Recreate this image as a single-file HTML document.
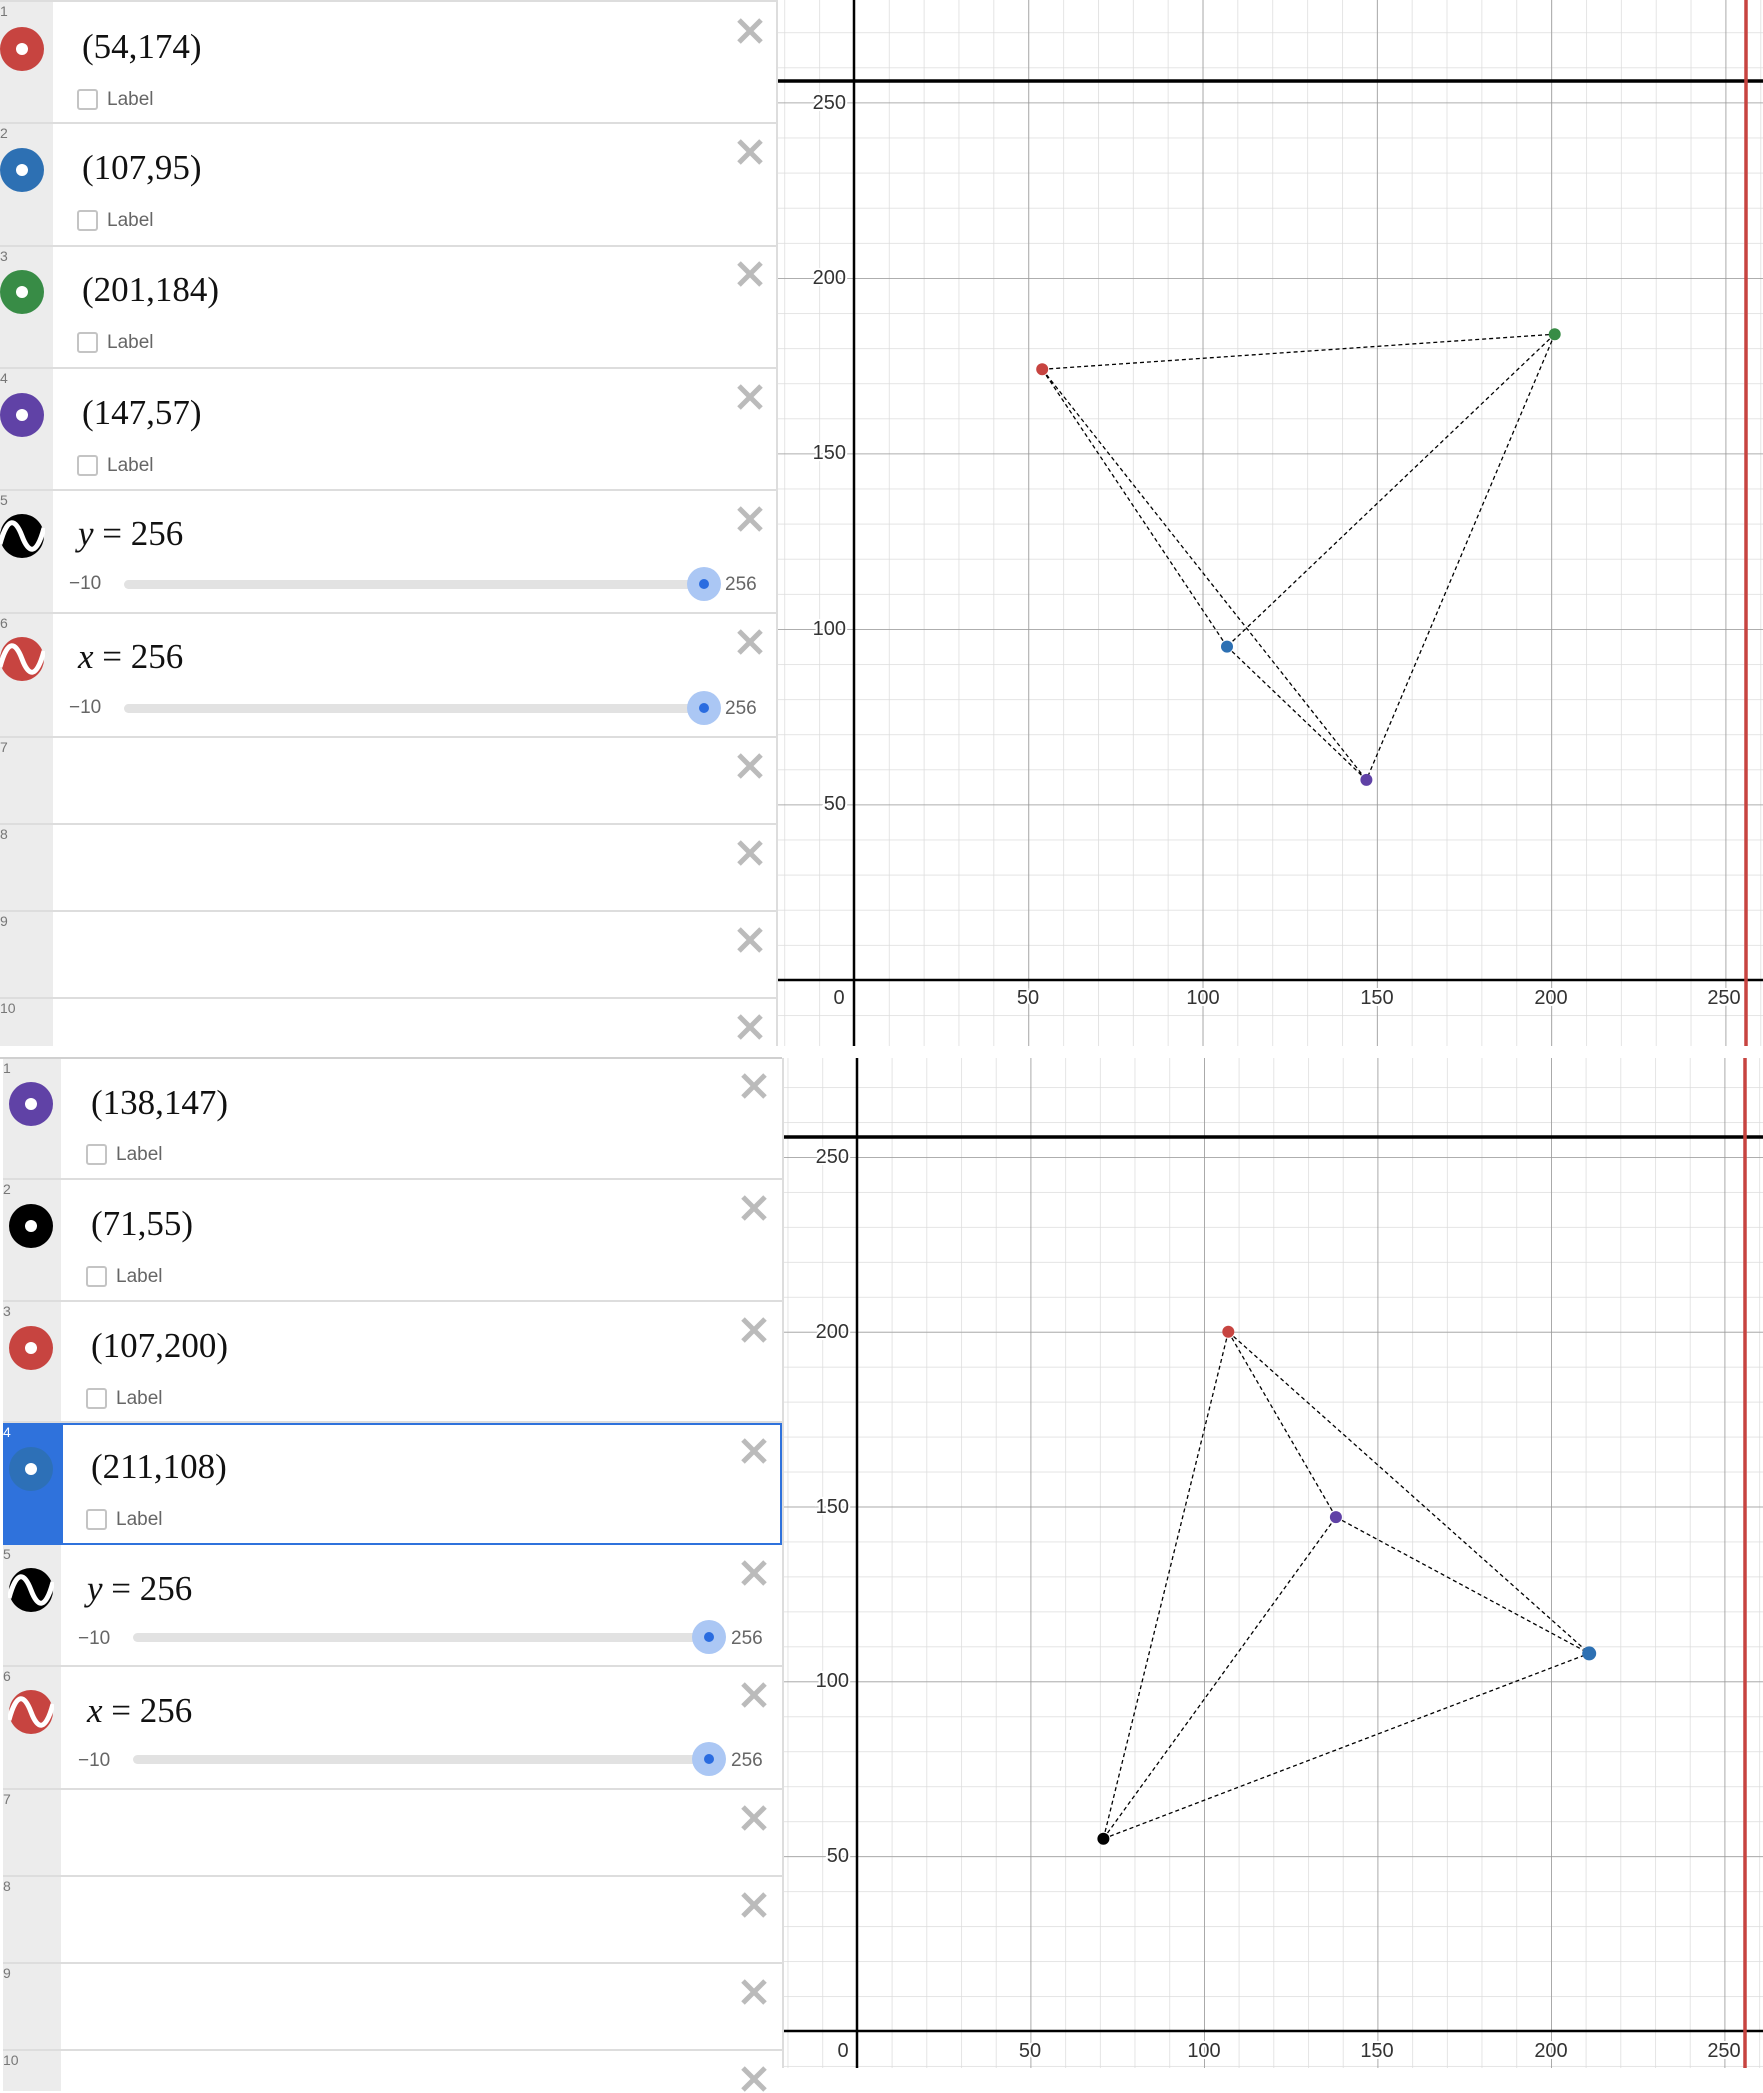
<!DOCTYPE html>
<html><head><meta charset="utf-8">
<style>
*{margin:0;padding:0;box-sizing:border-box}
body{width:1763px;height:2068px;position:relative;overflow:hidden;background:#fff;font-family:"Liberation Sans",sans-serif}
.row{position:absolute;background:#fff;border-bottom:2px solid #ddd}
.gut{position:absolute;top:0;bottom:0;background:#ececec}
.num{position:absolute;left:0;top:1px;font-size:14px;color:#777}
.ex{position:absolute;font-family:"Liberation Serif",serif;font-size:35px;color:#111;white-space:nowrap;line-height:40px}
.cb{position:absolute;width:21px;height:21px;border:2px solid #c4c4c4;border-radius:3px;background:#fff}
.lb{position:absolute;font-size:19px;color:#666;line-height:22px}
.x{position:absolute;width:28px;height:28px}
.sl{position:absolute;font-size:19px;color:#666;line-height:22px}
.tr{position:absolute;height:9px;border-radius:5px;background:#e2e2e2}
.h{position:absolute;width:34px;height:34px;border-radius:50%;background:#abc7f4}
.h::after{content:"";position:absolute;left:12px;top:12px;width:10px;height:10px;border-radius:50%;background:#2a6ce0}
.ic{position:absolute;width:46px;height:46px}
</style></head><body>

<svg width="1763" height="2068" style="position:absolute;left:0;top:0">
<defs>
<pattern id="m1" patternUnits="userSpaceOnUse" x="854" y="980" width="34.86" height="35.1"><path d="M0 0V35.1M0 0H34.86" stroke="#dcdcdc" stroke-width="1.5" fill="none"/></pattern>
<pattern id="M1" patternUnits="userSpaceOnUse" x="854" y="980" width="174.3" height="175.5"><path d="M0 0V175.5M0 0H174.3" stroke="#999" stroke-width="1.6" fill="none"/></pattern>
<pattern id="m2" patternUnits="userSpaceOnUse" x="857" y="2031" width="34.7" height="34.96"><path d="M0 0V34.96M0 0H34.7" stroke="#dcdcdc" stroke-width="1.5" fill="none"/></pattern>
<pattern id="M2" patternUnits="userSpaceOnUse" x="857" y="2031" width="173.5" height="174.8"><path d="M0 0V174.8M0 0H173.5" stroke="#999" stroke-width="1.6" fill="none"/></pattern>
</defs>
<rect x="776" y="0" width="987" height="1046" fill="url(#m1)"/>
<rect x="776" y="0" width="987" height="1046" fill="url(#M1)"/>
<line x1="854" y1="0" x2="854" y2="1046" stroke="#000" stroke-width="2.5"/>
<line x1="776" y1="980" x2="1763" y2="980" stroke="#000" stroke-width="2.5"/>
<line x1="776" y1="81" x2="1763" y2="81" stroke="#000" stroke-width="3.5"/>
<line x1="1746" y1="0" x2="1746" y2="1046" stroke="#c74440" stroke-width="3.5"/>
<g stroke="#000" stroke-width="1.3" stroke-dasharray="4 3" fill="none">
<path d="M1042.2 369.3L1554.7 334.2M1042.2 369.3L1227 646.6M1042.2 369.3L1366.4 779.9M1554.7 334.2L1227 646.6M1554.7 334.2L1366.4 779.9M1227 646.6L1366.4 779.9"/>
</g>
<circle cx="1042.2" cy="369.3" r="6" fill="#c74440"/>
<circle cx="1227" cy="646.6" r="6" fill="#2d70b3"/>
<circle cx="1554.7" cy="334.2" r="6" fill="#388c46"/>
<circle cx="1366.4" cy="779.9" r="6" fill="#6042a6"/>
<g font-family="Liberation Sans" font-size="20" fill="#333" stroke="#fff" stroke-width="4" paint-order="stroke" dominant-baseline="central">
<g text-anchor="end"><text x="846" y="103">250</text><text x="846" y="278">200</text><text x="846" y="453">150</text><text x="846" y="629">100</text><text x="846" y="804">50</text></g>
<g text-anchor="middle"><text x="839" y="998">0</text><text x="1028" y="998">50</text><text x="1203" y="998">100</text><text x="1377" y="998">150</text><text x="1551" y="998">200</text><text x="1724" y="998">250</text></g>
</g>
<rect x="782" y="1058" width="981" height="1010" fill="url(#m2)"/>
<rect x="782" y="1058" width="981" height="1010" fill="url(#M2)"/>
<line x1="857" y1="1058" x2="857" y2="2068" stroke="#000" stroke-width="2.5"/>
<line x1="782" y1="2031" x2="1763" y2="2031" stroke="#000" stroke-width="2.5"/>
<line x1="782" y1="1137" x2="1763" y2="1137" stroke="#000" stroke-width="3.5"/>
<line x1="1745" y1="1058" x2="1745" y2="2068" stroke="#c74440" stroke-width="3.5"/>
<g stroke="#000" stroke-width="1.3" stroke-dasharray="4 3" fill="none">
<path d="M1228.3 1331.8L1103.4 1838.7M1228.3 1331.8L1335.9 1517.1M1228.3 1331.8L1589.2 1653.4M1103.4 1838.7L1335.9 1517.1M1103.4 1838.7L1589.2 1653.4M1335.9 1517.1L1589.2 1653.4"/>
</g>
<circle cx="1335.9" cy="1517.1" r="6" fill="#6042a6"/>
<circle cx="1103.4" cy="1838.7" r="6" fill="#000"/>
<circle cx="1228.3" cy="1331.8" r="6" fill="#c74440"/>
<circle cx="1589.2" cy="1653.4" r="7" fill="#2d70b3"/>
<g font-family="Liberation Sans" font-size="20" fill="#333" stroke="#fff" stroke-width="4" paint-order="stroke" dominant-baseline="central">
<g text-anchor="end"><text x="849" y="1157">250</text><text x="849" y="1332">200</text><text x="849" y="1507">150</text><text x="849" y="1681">100</text><text x="849" y="1856">50</text></g>
<g text-anchor="middle"><text x="843" y="2051">0</text><text x="1030" y="2051">50</text><text x="1204" y="2051">100</text><text x="1377" y="2051">150</text><text x="1551" y="2051">200</text><text x="1724" y="2051">250</text></g>
</g>
<rect x="0" y="1046" width="1763" height="12" fill="#fff"/>
<line x1="0" y1="1058" x2="782" y2="1058" stroke="#d0d0d0" stroke-width="2"/>
</svg>

<div style="position:absolute;left:776px;top:0;width:2px;height:1046px;background:#ddd"></div>

<div class="row" style="left:0;top:0;width:776px;height:124px;border-top:2px solid #ddd"><div class="gut" style="left:0;width:53px"><span class="num">1</span></div>
<svg class="ic" style="left:-1px;top:24px" viewBox="-23 -23 46 46"><circle r="22" fill="#c74440"/><circle r="6" fill="#fff"/></svg>
<div class="ex" style="left:82px;top:25px">(54,174)</div><div class="cb" style="left:77px;top:87px"></div><div class="lb" style="left:107px;top:87px">Label</div>
<svg class="x" style="left:736px;top:15px" viewBox="0 0 28 28"><path d="M3 3L25 25M25 3L3 25" stroke="#bbb" stroke-width="5"/></svg></div>

<div class="row" style="left:0;top:124px;width:776px;height:123px"><div class="gut" style="left:0;width:53px"><span class="num">2</span></div>
<svg class="ic" style="left:-1px;top:23px" viewBox="-23 -23 46 46"><circle r="22" fill="#2d70b3"/><circle r="6" fill="#fff"/></svg>
<div class="ex" style="left:82px;top:24px">(107,95)</div><div class="cb" style="left:77px;top:86px"></div><div class="lb" style="left:107px;top:86px">Label</div>
<svg class="x" style="left:736px;top:14px" viewBox="0 0 28 28"><path d="M3 3L25 25M25 3L3 25" stroke="#bbb" stroke-width="5"/></svg></div>

<div class="row" style="left:0;top:247px;width:776px;height:122px"><div class="gut" style="left:0;width:53px"><span class="num">3</span></div>
<svg class="ic" style="left:-1px;top:22px" viewBox="-23 -23 46 46"><circle r="22" fill="#388c46"/><circle r="6" fill="#fff"/></svg>
<div class="ex" style="left:82px;top:23px">(201,184)</div><div class="cb" style="left:77px;top:85px"></div><div class="lb" style="left:107px;top:85px">Label</div>
<svg class="x" style="left:736px;top:13px" viewBox="0 0 28 28"><path d="M3 3L25 25M25 3L3 25" stroke="#bbb" stroke-width="5"/></svg></div>

<div class="row" style="left:0;top:369px;width:776px;height:122px"><div class="gut" style="left:0;width:53px"><span class="num">4</span></div>
<svg class="ic" style="left:-1px;top:23px" viewBox="-23 -23 46 46"><circle r="22" fill="#6042a6"/><circle r="6" fill="#fff"/></svg>
<div class="ex" style="left:82px;top:24px">(147,57)</div><div class="cb" style="left:77px;top:86px"></div><div class="lb" style="left:107px;top:86px">Label</div>
<svg class="x" style="left:736px;top:14px" viewBox="0 0 28 28"><path d="M3 3L25 25M25 3L3 25" stroke="#bbb" stroke-width="5"/></svg></div>

<div class="row" style="left:0;top:491px;width:776px;height:123px"><div class="gut" style="left:0;width:53px"><span class="num">5</span></div>
<svg class="ic" style="left:-1px;top:22px" viewBox="-23 -23 46 46"><circle r="22" fill="#000"/><path d="M-22 8C-14 -22 -6 -16 0 0S14 22 22 -8" stroke="#fff" stroke-width="5" fill="none"/></svg>
<div class="ex" style="left:78px;top:23px"><i>y</i> = 256</div>
<div class="sl" style="left:69px;top:82px">−10</div><div class="tr" style="left:124px;top:89px;width:582px"></div><div class="h" style="left:687px;top:76px"></div><div class="sl" style="left:725px;top:83px">256</div>
<svg class="x" style="left:736px;top:14px" viewBox="0 0 28 28"><path d="M3 3L25 25M25 3L3 25" stroke="#bbb" stroke-width="5"/></svg></div>

<div class="row" style="left:0;top:614px;width:776px;height:124px"><div class="gut" style="left:0;width:53px"><span class="num">6</span></div>
<svg class="ic" style="left:-1px;top:22px" viewBox="-23 -23 46 46"><circle r="22" fill="#c74440"/><path d="M-22 8C-14 -22 -6 -16 0 0S14 22 22 -8" stroke="#fff" stroke-width="5" fill="none"/></svg>
<div class="ex" style="left:78px;top:23px"><i>x</i> = 256</div>
<div class="sl" style="left:69px;top:83px">−10</div><div class="tr" style="left:124px;top:90px;width:582px"></div><div class="h" style="left:687px;top:77px"></div><div class="sl" style="left:725px;top:84px">256</div>
<svg class="x" style="left:736px;top:14px" viewBox="0 0 28 28"><path d="M3 3L25 25M25 3L3 25" stroke="#bbb" stroke-width="5"/></svg></div>

<div class="row" style="left:0;top:738px;width:776px;height:87px"><div class="gut" style="left:0;width:53px"><span class="num">7</span></div><svg class="x" style="left:736px;top:14px" viewBox="0 0 28 28"><path d="M3 3L25 25M25 3L3 25" stroke="#bbb" stroke-width="5"/></svg></div>
<div class="row" style="left:0;top:825px;width:776px;height:87px"><div class="gut" style="left:0;width:53px"><span class="num">8</span></div><svg class="x" style="left:736px;top:14px" viewBox="0 0 28 28"><path d="M3 3L25 25M25 3L3 25" stroke="#bbb" stroke-width="5"/></svg></div>
<div class="row" style="left:0;top:912px;width:776px;height:87px"><div class="gut" style="left:0;width:53px"><span class="num">9</span></div><svg class="x" style="left:736px;top:14px" viewBox="0 0 28 28"><path d="M3 3L25 25M25 3L3 25" stroke="#bbb" stroke-width="5"/></svg></div>
<div class="row" style="left:0;top:999px;width:776px;height:47px;border-bottom:none"><div class="gut" style="left:0;width:53px"><span class="num">10</span></div><svg class="x" style="left:736px;top:14px" viewBox="0 0 28 28"><path d="M3 3L25 25M25 3L3 25" stroke="#bbb" stroke-width="5"/></svg></div>

<div style="position:absolute;left:782px;top:1058px;width:2px;height:1010px;background:#ddd"></div>

<div class="row" style="left:3px;top:1059px;width:779px;height:121px"><div class="gut" style="left:0;width:58px"><span class="num">1</span></div>
<svg class="ic" style="left:5px;top:22px" viewBox="-23 -23 46 46"><circle r="22" fill="#6042a6"/><circle r="6" fill="#fff"/></svg>
<div class="ex" style="left:88px;top:24px">(138,147)</div><div class="cb" style="left:83px;top:85px"></div><div class="lb" style="left:113px;top:85px">Label</div>
<svg class="x" style="left:737px;top:13px" viewBox="0 0 28 28"><path d="M3 3L25 25M25 3L3 25" stroke="#bbb" stroke-width="5"/></svg></div>

<div class="row" style="left:3px;top:1180px;width:779px;height:122px"><div class="gut" style="left:0;width:58px"><span class="num">2</span></div>
<svg class="ic" style="left:5px;top:23px" viewBox="-23 -23 46 46"><circle r="22" fill="#000"/><circle r="6" fill="#fff"/></svg>
<div class="ex" style="left:88px;top:24px">(71,55)</div><div class="cb" style="left:83px;top:86px"></div><div class="lb" style="left:113px;top:86px">Label</div>
<svg class="x" style="left:737px;top:14px" viewBox="0 0 28 28"><path d="M3 3L25 25M25 3L3 25" stroke="#bbb" stroke-width="5"/></svg></div>

<div class="row" style="left:3px;top:1302px;width:779px;height:121px"><div class="gut" style="left:0;width:58px"><span class="num">3</span></div>
<svg class="ic" style="left:5px;top:23px" viewBox="-23 -23 46 46"><circle r="22" fill="#c74440"/><circle r="6" fill="#fff"/></svg>
<div class="ex" style="left:88px;top:24px">(107,200)</div><div class="cb" style="left:83px;top:86px"></div><div class="lb" style="left:113px;top:86px">Label</div>
<svg class="x" style="left:737px;top:14px" viewBox="0 0 28 28"><path d="M3 3L25 25M25 3L3 25" stroke="#bbb" stroke-width="5"/></svg></div>

<div class="row" style="left:3px;top:1423px;width:779px;height:122px;border:2px solid #2f72dc"><div class="gut" style="left:-2px;top:-2px;bottom:-2px;width:60px;background:#2f72dc"><span class="num" style="color:#fff">4</span></div>
<svg class="ic" style="left:3px;top:21px" viewBox="-23 -23 46 46"><circle r="22" fill="#2d70b3" opacity=".9"/><circle r="6" fill="#fff"/></svg>
<div class="ex" style="left:86px;top:22px">(211,108)</div><div class="cb" style="left:81px;top:84px"></div><div class="lb" style="left:111px;top:84px">Label</div>
<svg class="x" style="left:735px;top:12px" viewBox="0 0 28 28"><path d="M3 3L25 25M25 3L3 25" stroke="#bbb" stroke-width="5"/></svg></div>

<div class="row" style="left:3px;top:1545px;width:779px;height:122px"><div class="gut" style="left:0;width:58px"><span class="num">5</span></div>
<svg class="ic" style="left:5px;top:22px" viewBox="-23 -23 46 46"><circle r="22" fill="#000"/><path d="M-22 8C-14 -22 -6 -16 0 0S14 22 22 -8" stroke="#fff" stroke-width="5" fill="none"/></svg>
<div class="ex" style="left:84px;top:24px"><i>y</i> = 256</div>
<div class="sl" style="left:75px;top:83px">−10</div><div class="tr" style="left:130px;top:88px;width:578px"></div><div class="h" style="left:689px;top:75px"></div><div class="sl" style="left:728px;top:83px">256</div>
<svg class="x" style="left:737px;top:14px" viewBox="0 0 28 28"><path d="M3 3L25 25M25 3L3 25" stroke="#bbb" stroke-width="5"/></svg></div>

<div class="row" style="left:3px;top:1667px;width:779px;height:123px"><div class="gut" style="left:0;width:58px"><span class="num">6</span></div>
<svg class="ic" style="left:5px;top:22px" viewBox="-23 -23 46 46"><circle r="22" fill="#c74440"/><path d="M-22 8C-14 -22 -6 -16 0 0S14 22 22 -8" stroke="#fff" stroke-width="5" fill="none"/></svg>
<div class="ex" style="left:84px;top:24px"><i>x</i> = 256</div>
<div class="sl" style="left:75px;top:83px">−10</div><div class="tr" style="left:130px;top:88px;width:578px"></div><div class="h" style="left:689px;top:75px"></div><div class="sl" style="left:728px;top:83px">256</div>
<svg class="x" style="left:737px;top:14px" viewBox="0 0 28 28"><path d="M3 3L25 25M25 3L3 25" stroke="#bbb" stroke-width="5"/></svg></div>

<div class="row" style="left:3px;top:1790px;width:779px;height:87px"><div class="gut" style="left:0;width:58px"><span class="num">7</span></div><svg class="x" style="left:737px;top:14px" viewBox="0 0 28 28"><path d="M3 3L25 25M25 3L3 25" stroke="#bbb" stroke-width="5"/></svg></div>
<div class="row" style="left:3px;top:1877px;width:779px;height:87px"><div class="gut" style="left:0;width:58px"><span class="num">8</span></div><svg class="x" style="left:737px;top:14px" viewBox="0 0 28 28"><path d="M3 3L25 25M25 3L3 25" stroke="#bbb" stroke-width="5"/></svg></div>
<div class="row" style="left:3px;top:1964px;width:779px;height:87px"><div class="gut" style="left:0;width:58px"><span class="num">9</span></div><svg class="x" style="left:737px;top:14px" viewBox="0 0 28 28"><path d="M3 3L25 25M25 3L3 25" stroke="#bbb" stroke-width="5"/></svg></div>
<div class="row" style="left:3px;top:2051px;width:779px;height:40px;border-bottom:none"><div class="gut" style="left:0;width:58px"><span class="num">10</span></div><svg class="x" style="left:737px;top:14px" viewBox="0 0 28 28"><path d="M3 3L25 25M25 3L3 25" stroke="#bbb" stroke-width="5"/></svg></div>

</body></html>
